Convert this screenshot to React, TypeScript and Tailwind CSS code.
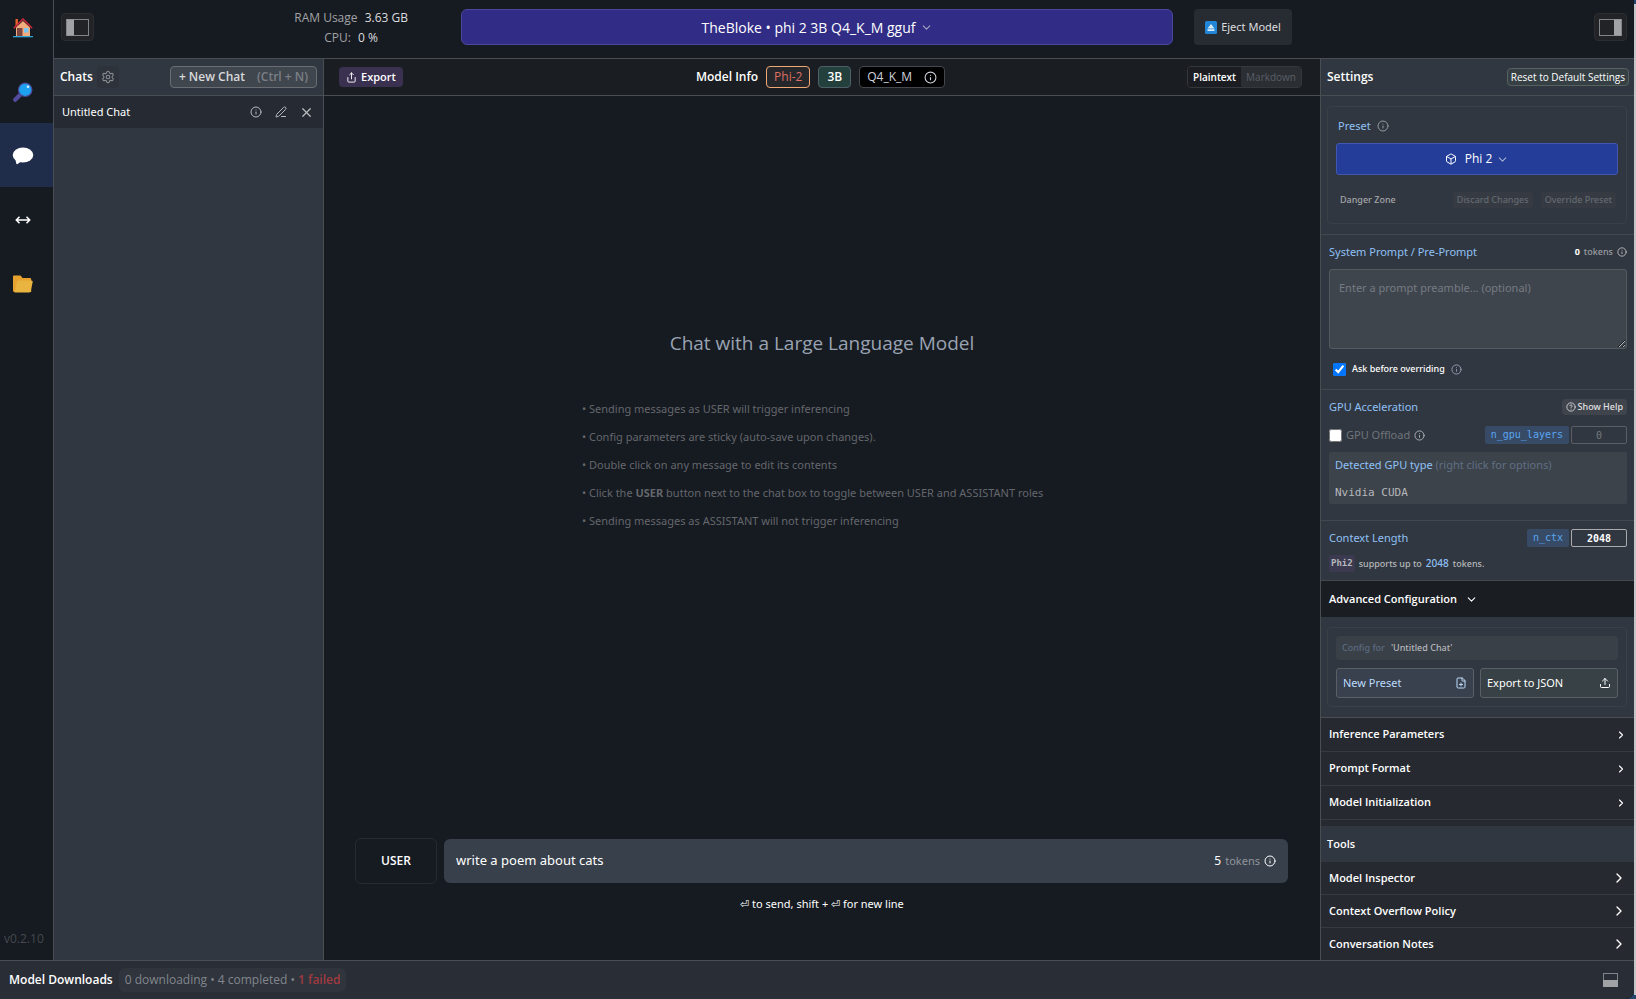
import React from 'react';
import {
  ChevronDown,
  ChevronRight,
  CircleHelp,
  Info,
  Box,
  FilePlus,
  PenLine,
  Settings,
  Share,
  Upload,
  X,
} from 'lucide-react';

const mono = 'font-["DejaVu_Sans_Mono","Liberation_Mono",monospace]';
const open = 'font-["Open_Sans","Noto_Sans",sans-serif]';

function HouseIcon() {
  return (
    <svg viewBox="0 0 20 20" className="size-5">
      <rect x="2.5" y="1" width="2.4" height="7" fill="#e8622c" />
      <path d="M3 9.5 10 3l7 6.500V18H3z" fill="#f3ad7c" />
      <path d="M.8 10.200 10 1l9.200 9.200" fill="none" stroke="#c8283a" strokeWidth="1.600" />
      <rect x="4" y="10" width="5.500" height="8" fill="#7d4540" />
      <rect x="11" y="10" width="4.500" height="4.500" fill="#7cc5f2" />
      <rect x="0" y="18" width="20" height="1.300" fill="#2ea3d6" />
    </svg>
  );
}

function SearchIcon() {
  return (
    <svg viewBox="0 0 20 20" className="size-5">
      <path d="M8 12 2.200 17.800" stroke="#524a9c" strokeWidth="4.200" strokeLinecap="round" />
      <circle cx="12.200" cy="7.800" r="7.300" fill="#4a4a98" />
      <circle cx="12.200" cy="7.800" r="6.100" fill="#1ea0f0" />
      <circle cx="15" cy="4.800" r="1.300" fill="#d8f0ff" />
    </svg>
  );
}

function ChatIcon() {
  return (
    <svg viewBox="0 0 22 18" className="h-[18px] w-[22px]">
      <ellipse cx="11" cy="8" rx="10.300" ry="7.600" fill="#fff" />
      <path d="M3 11c1 3 .8 4.500 1.500 6 .8.600 2.500-1 4.500-2.500z" fill="#fff" />
    </svg>
  );
}

function ArrowsIcon() {
  return (
    <svg viewBox="0 0 16 10" className="h-[10px] w-4" fill="none" stroke="#fff" strokeWidth="1.500">
      <path d="M1.500 5h13M4.500 1.800 1.300 5l3.200 3.200M11.500 1.800 14.700 5l-3.200 3.200" />
    </svg>
  );
}

function FolderIcon() {
  return (
    <svg viewBox="0 0 20 18" className="h-[18px] w-5">
      <path d="M0 1.500Q0 .5 1 .5h6.500l2 2.500H17q1.200 0 1.200 1.200V17H1.500Q0 17 0 15.500z" fill="#e8a32e" />
      <path d="M4.500 5.500h14q1.500 0 1.200 1.500l-2 9q-.3 1.500-1.700 1.500H1.500z" fill="#eab440" />
    </svg>
  );
}

function PanelIcon({ side }: { side: 'left' | 'right' }) {
  return (
    <svg viewBox="0 0 23 17" className="h-[17px] w-[23px]">
      <rect x=".5" y=".5" width="22" height="16" fill="none" stroke="#80858a" />
      <rect x={side === 'left' ? 1 : 15} y="0.5" width="7" height="16" fill="#a0a2a5" />
    </svg>
  );
}

const navItems = [
  { label: 'Home', icon: <HouseIcon /> },
  { label: 'Search', icon: <SearchIcon /> },
  { label: 'Chat', icon: <ChatIcon />, active: true },
  { label: 'Local Server', icon: <ArrowsIcon /> },
  { label: 'My Models', icon: <FolderIcon /> },
];

function Sidebar() {
  return (
    <nav className="flex w-[54px] shrink-0 flex-col border-r border-[#4a4d52]">
      {navItems.map((item) => (
        <button
          key={item.label}
          aria-label={item.label}
          className={
            item.active
              ? 'flex h-16 items-center justify-center bg-[#1f2c4a] pt-0.5 pr-2'
              : 'flex h-16 items-center justify-center pt-0.5 pr-2 first:h-[59px] first:pt-0 first:pb-1'
          }
        >
          {item.icon}
        </button>
      ))}
      <span className={`mt-auto pb-[11px] pl-1 text-[12px] leading-5 text-[#45494f] ${open}`}>v0.2.10</span>
    </nav>
  );
}

function TopBar() {
  return (
    <header className="grid h-[59px] shrink-0 grid-cols-[400fr_712fr_454fr] items-start border-b border-[#4a4d52] px-[7px] pt-[9px]">
      <div className="flex items-start justify-between pr-[53px]">
        <button
          aria-label="Toggle chats panel"
          className="mt-1 flex h-7 w-[33px] items-center justify-center rounded border border-[#2b2d31] bg-[#212327]"
        >
          <PanelIcon side="left" />
        </button>
        <div className={`-mt-px text-center text-[12px] leading-5 text-[#a1a3a6] ${open}`}>
          <div>
            RAM Usage <span className="ml-1 text-[#dcdddf]">3.63 GB</span>
          </div>
          <div>
            CPU: <span className="ml-1 text-[#dcdddf]">0 %</span>
          </div>
        </div>
      </div>
      <button
        className={`flex h-9 items-center justify-center gap-1 rounded-md border border-[#4c469c] bg-[#312c85] text-[14px] text-white ${open}`}
      >
        TheBloke • phi 2 3B Q4_K_M gguf
        <ChevronDown size={13} className="text-[#a5a7c0]" />
      </button>
      <div className="flex items-start justify-between pl-[21px]">
        <button className="flex h-9 w-[98px] items-center justify-center gap-1 rounded bg-[#272b32] text-[11px] text-[#dcdddf]">
          <svg viewBox="0 0 12 13" className="h-[13px] w-3">
            <rect width="12" height="13" rx="1.500" fill="#2186d8" />
            <path d="M6 3 9.500 7.500h-7zM2.500 8.300h7V10h-7z" fill="#d7ebfa" />
          </svg>
          Eject Model
        </button>
        <button
          aria-label="Toggle settings panel"
          className="mt-1 flex h-7 w-[33px] items-center justify-center rounded border border-[#2b2d31] bg-[#212327]"
        >
          <PanelIcon side="right" />
        </button>
      </div>
    </header>
  );
}

function ChatsPanel() {
  return (
    <aside className={`flex w-[270px] shrink-0 flex-col border-r border-[#4a4d52] bg-[#313740] ${open}`}>
      <div className="flex h-[37px] shrink-0 items-center border-b border-[#4a4d52] px-[6px]">
        <h2 className="text-[12px] font-semibold text-white">Chats</h2>
        <button
          aria-label="Chat settings"
          className="ml-1 flex size-[22px] items-center justify-center rounded bg-[#2e333b] text-[#8b8e93]"
        >
          <Settings size={14} strokeWidth={1.8} />
        </button>
        <button className="ml-auto flex h-[22px] items-center gap-3 rounded border border-[#6a6e73] bg-[#40464e] px-2 text-[12px] font-semibold text-[#d8d9db]">
          <span>+ New Chat</span>
          <span className="text-[#7b7f85]">(Ctrl + N)</span>
        </button>
      </div>
      <div className="flex h-8 items-center bg-[#262b33] pr-[9px] pl-2 text-[#b9bbbe]">
        <span className='flex-1 font-["Noto_Sans",sans-serif] text-[11px] text-white'>Untitled Chat</span>
        <button aria-label="Chat info">
          <Info size={12} />
        </button>
        <button aria-label="Rename chat" className="ml-[13px]">
          <PenLine size={12} />
        </button>
        <button aria-label="Delete chat" className="ml-3">
          <X size={15} />
        </button>
      </div>
    </aside>
  );
}

function ChatHeader() {
  return (
    <div
      className={`grid h-[37px] shrink-0 grid-cols-[1fr_auto_1fr] items-center border-b border-[#4a4d52] bg-[#1a1d21] pr-[18px] pl-[15px] ${open}`}
    >
      <button className="flex h-5 items-center gap-1 justify-self-start rounded bg-[#3a3050] px-[7px] text-[11px] font-semibold text-white">
        <Share size={11} />
        Export
      </button>
      <div className="flex items-center gap-2 text-[12px]">
        <span className="font-semibold text-white">Model Info</span>
        <span className="flex h-[22px] items-center rounded border border-[#f0a875] bg-[#26272b] px-[7px] font-medium text-[#dc6f64]">
          Phi-2
        </span>
        <span className="flex h-[22px] items-center rounded border border-[#4d6068] bg-[#23403d] px-2 font-semibold text-white">
          3B
        </span>
        <span className="flex h-[22px] items-center gap-3 rounded border border-[#44474c] bg-black px-[7px] text-[#d0d2dc]">
          Q4_K_M
          <Info size={13} />
        </span>
      </div>
      <div className="flex h-[22px] items-stretch justify-self-end overflow-hidden rounded border border-[#34373c] text-[10px] font-medium">
        <button className="bg-[#1c1d22] px-[5px] font-semibold text-white">Plaintext</button>
        <button className="bg-[#2b2f34] px-[5px] text-[#5a5e66]">Markdown</button>
      </div>
    </div>
  );
}

function ChatArea() {
  return (
    <main className="flex min-w-0 flex-1 flex-col">
      <ChatHeader />
      <div className="flex flex-1 flex-col items-center">
        <h1 className={`mt-[233px] text-[19px] leading-7 text-[#9aa3b1] ${open}`}>
          Chat with a Large Language Model
        </h1>
        <ul className="mt-[38px] min-w-[480px] text-[11px] leading-7 text-[#64676c]">
          <li>• Sending messages as USER will trigger inferencing</li>
          <li>• Config parameters are sticky (auto-save upon changes).</li>
          <li>• Double click on any message to edit its contents</li>
          <li>
            • Click the <b>USER</b> button next to the chat box to toggle between USER and ASSISTANT roles
          </li>
          <li>• Sending messages as ASSISTANT will not trigger inferencing</li>
        </ul>
      </div>
      <div className="flex items-center gap-[7px] pr-8 pl-[31px]">
        <button
          className={`h-[46px] w-[82px] rounded-md border border-[#272a30] text-[12px] font-semibold text-white ${open}`}
        >
          USER
        </button>
        <div className="flex h-11 flex-1 items-center rounded-md bg-[#37404b] px-3 text-white">
          <input
            aria-label="Message"
            defaultValue="write a poem about cats"
            className="min-w-0 flex-1 bg-transparent text-[13px] outline-none"
          />
          <span className="text-[12px]">5</span>
          <span className="mx-1 text-[11px] text-[#90959c]">tokens</span>
          <Info size={12} />
        </div>
      </div>
      <p className="pt-[10px] pb-[46px] text-center text-[11px] leading-5 text-white">
        ⏎ to send, shift + ⏎ for new line
      </p>
    </main>
  );
}

function ConfigRow({ label }: { label: string }) {
  return (
    <button
      className={`flex h-[34px] w-full items-center justify-between border-b border-[#363a41] pr-[7px] pl-2 font-semibold text-white ${open}`}
    >
      {label}
      <ChevronRight size={12} strokeWidth={2.2} />
    </button>
  );
}

function ToolRow({ label }: { label: string }) {
  return (
    <button
      className={`flex h-[33px] w-full items-center justify-between border-b border-[#363a41] pr-[7px] pl-2 font-semibold text-white ${open}`}
    >
      {label}
      <ChevronRight size={16} />
    </button>
  );
}

function SettingsPanel() {
  return (
    <aside className="flex w-[314px] shrink-0 flex-col overflow-hidden border-l border-[#4a4d52] bg-[#313740] text-[11px]">
      <div
        className={`flex h-[37px] shrink-0 items-center justify-between border-b border-[#4a4d52] pr-[5px] pl-[6px] ${open}`}
      >
        <h2 className="text-[12px] font-semibold text-white">Settings</h2>
        <button className="h-[18px] rounded border border-[#56625f] bg-[#353f44] px-[3px] text-[10px] leading-4 text-white">
          Reset to Default Settings
        </button>
      </div>

      <section className="shrink-0 border-b border-[#43484f] py-[10px] pr-[7px] pl-[6px]">
        <div className="flex h-[118px] flex-col rounded border border-[#3a4048] px-2 pt-[9px]">
          <div className="flex items-center gap-1.5 pl-0.5 leading-5 text-[#8fc0f5]">
            Preset <Info size={12} className="text-[#96999d]" />
          </div>
          <button
            className={`mt-[7px] flex h-8 items-center justify-center gap-1 rounded-[3px] border border-[#4258b0] bg-[#233d99] text-[12px] text-white ${open}`}
          >
            <Box size={12} className="mr-1" />
            Phi 2
            <ChevronDown size={13} className="text-[#a5b0d0]" />
          </button>
          <div className="mt-[17px] flex items-center gap-2 pr-0.5 pl-1 text-[9px] leading-4">
            <span className="flex-1 font-medium text-[#a4a6a9]">Danger Zone</span>
            <button className="rounded bg-[#363b43] px-1 font-medium text-[#646970]">Discard Changes</button>
            <button className="rounded bg-[#363b43] px-1 font-medium text-[#646970]">Override Preset</button>
          </div>
        </div>
      </section>

      <section className="h-[155px] shrink-0 border-b border-[#43484f] pt-[7px] pr-[7px] pl-2">
        <div className="flex items-center justify-between leading-5">
          <label htmlFor="system-prompt" className="text-[#8fc0f5]">
            System Prompt / Pre-Prompt
          </label>
          <span className="flex items-center gap-1 text-[9px] font-medium text-[#9a9da2]">
            <b className="text-white">0</b> tokens <Info size={10} className="text-[#c6c8ca]" />
          </span>
        </div>
        <textarea
          id="system-prompt"
          placeholder="Enter a prompt preamble... (optional)"
          className="mt-[7px] block h-20 w-full rounded-[3px] border border-[#555a60] bg-[#3f454d] px-[9px] pt-2 leading-5 placeholder:text-[#757b83]"
        />
        <label className="mt-[10px] flex items-center pl-1 text-[9px] leading-5 font-medium text-white">
          <input type="checkbox" defaultChecked className="mr-1.5 size-[13px]" />
          Ask before overriding
          <Info size={11} className="ml-1.5 text-[#9aa0b8]" />
        </label>
      </section>

      <section className="h-[131px] shrink-0 border-b border-[#43484f] pt-2 pr-[7px] pl-2">
        <div className="flex items-center justify-between leading-[18px]">
          <span className="text-[#8fc0f5]">GPU Acceleration</span>
          <button className="flex h-4 items-center gap-0.5 rounded bg-[#40454d] px-1 text-[9px] font-medium text-[#e0e1e2]">
            <CircleHelp size={10} /> Show Help
          </button>
        </div>
        <div className="mt-[10px] flex h-[18px] items-center gap-0.5">
          <label className="flex flex-1 items-center gap-1 text-[#6f747b]">
            <input type="checkbox" className="size-[13px]" />
            GPU Offload
            <Info size={11} className="text-[#b2b5bb]" />
          </label>
          <label
            htmlFor="gpu-layers"
            className={`h-[18px] rounded-xs bg-[#374b66] px-[6px] text-[10px] leading-[18px] text-[#5aa5ee] ${mono}`}
          >
            n_gpu_layers
          </label>
          <input
            id="gpu-layers"
            defaultValue="0"
            disabled
            className={`h-[18px] w-14 rounded-xs border border-[#5b5f65] text-center text-[10px] text-[#74787e] ${mono}`}
          />
        </div>
        <div className="mt-2 h-[52px] rounded-xs bg-[#3d434b] px-[6px] pt-[3px] leading-5">
          <div className="text-[#8fc0f5]">
            Detected GPU type <span className="text-[#5f6f83]">(right click for options)</span>
          </div>
          <div className={`mt-2 text-[11px] text-[#b5b7ba] ${mono}`}>Nvidia CUDA</div>
        </div>
      </section>

      <section className="h-[60px] shrink-0 border-b border-[#43484f] pt-2 pr-[7px] pl-2">
        <div className="flex h-[18px] items-center gap-0.5">
          <span className="flex-1 text-[#8fc0f5]">Context Length</span>
          <label
            htmlFor="context-length"
            className={`h-[18px] rounded-xs bg-[#374b66] px-[6px] text-[10px] leading-[18px] text-[#5aa5ee] ${mono}`}
          >
            n_ctx
          </label>
          <input
            id="context-length"
            defaultValue="2048"
            className={`h-[18px] w-14 rounded-xs border border-[#a9abae] text-center text-[10px] font-bold text-white ${mono}`}
          />
        </div>
        <p className="mt-2 flex items-center gap-1 text-[9px] leading-[17px] font-medium text-[#b5b7ba]">
          <span className={`rounded-xs bg-[#3b3a50] px-[2px] font-bold ${mono}`}>Phi2</span>
          supports up to <span className="text-[10px] text-[#8fc0f5]">2048</span> tokens.
        </p>
      </section>

      <button
        className={`flex h-9 shrink-0 items-center gap-2 bg-[#1a1d21] pl-2 font-semibold text-white ${open}`}
      >
        Advanced Configuration
        <ChevronDown size={13} />
      </button>

      <section className="shrink-0 border-b border-[#4a4d52] py-[10px] pr-[7px] pl-[6px]">
        <div className="rounded border border-[#3a4048] p-2">
          <div className="flex h-6 items-center gap-1.5 rounded bg-[#3a4048] px-1.5 text-[9px] font-medium text-[#b5b7ba]">
            <span className="text-[#5b6b80]">Config for</span> 'Untitled Chat'
          </div>
          <div className="mt-2 grid grid-cols-2 gap-[6px]">
            <button className="flex h-[30px] items-center justify-between rounded-[3px] border border-[#5b6066] bg-[#39404e] px-1.5 text-[#bcdcfb]">
              New Preset <FilePlus size={12} />
            </button>
            <button className="flex h-[30px] items-center justify-between rounded-[3px] border border-[#5b6066] bg-[#374146] px-1.5 text-white">
              Export to JSON <Upload size={12} />
            </button>
          </div>
        </div>
      </section>

      <div className="shrink-0 bg-[#262a30] pb-1.5">
        <ConfigRow label="Inference Parameters" />
        <ConfigRow label="Prompt Format" />
        <ConfigRow label="Model Initialization" />
      </div>
      <h3 className={`flex h-9 shrink-0 items-center pl-[6px] font-semibold text-white ${open}`}>Tools</h3>
      <div className="shrink-0 bg-[#262a30]">
        <ToolRow label="Model Inspector" />
        <ToolRow label="Context Overflow Policy" />
        <ToolRow label="Conversation Notes" />
      </div>
    </aside>
  );
}

function StatusBar() {
  return (
    <footer
      className={`flex h-[39px] shrink-0 items-center border-t border-[#4a4d52] bg-[#292d35] pr-4 pl-[9px] text-[12px] ${open}`}
    >
      <span className="font-semibold text-white">Model Downloads</span>
      <span className="ml-1.5 rounded-md bg-[#2f343d] px-1.5 leading-6 text-[#82868c]">
        0 downloading • 4 completed • <b className="font-semibold text-[#a03a40]">1 failed</b>
      </span>
      <button aria-label="Toggle downloads panel" className="ml-auto">
        <svg viewBox="0 0 15 14" className="h-[14px] w-[15px]">
          <rect x=".5" y=".5" width="14" height="13" fill="none" stroke="#80858a" />
          <rect y="7" width="15" height="7" fill="#a0a2a5" />
        </svg>
      </button>
    </footer>
  );
}

export default function App() {
  return (
    <div className='flex h-screen bg-[#24466e] font-["Noto_Sans",sans-serif]'>
      <div className="flex min-w-0 flex-1 flex-col overflow-hidden rounded-br-lg bg-[#161a21]">
        <div className="flex min-h-0 flex-1">
          <Sidebar />
          <div className="flex min-w-0 flex-1 flex-col">
            <TopBar />
            <div className="flex min-h-0 flex-1">
              <ChatsPanel />
              <ChatArea />
              <SettingsPanel />
            </div>
          </div>
        </div>
        <StatusBar />
      </div>
      <div className="w-0.5 py-1">
        <div className="h-full bg-[#c4c6c9]" />
      </div>
    </div>
  );
}
